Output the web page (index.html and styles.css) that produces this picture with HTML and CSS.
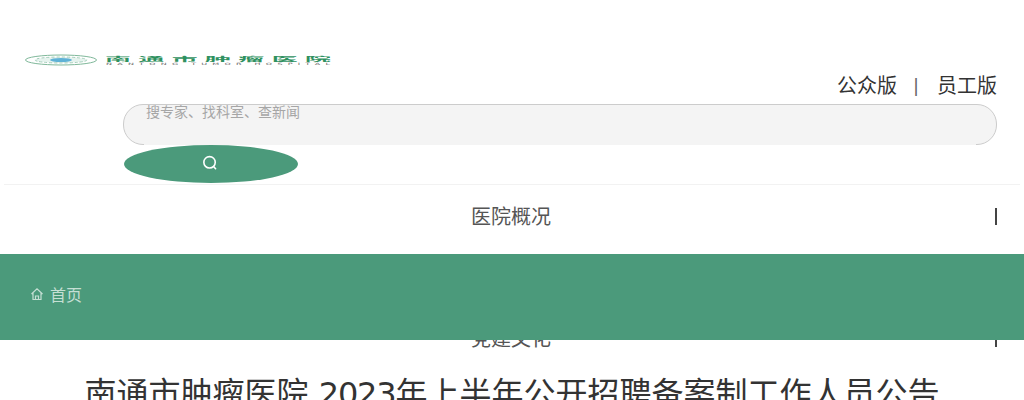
FILE: index.html
```html
<!DOCTYPE html>
<html lang="zh-CN">
<head>
    <meta charset="UTF-8">
    <meta name="viewport" content="width=device-width, initial-scale=1.0">
    <title>南通市肿瘤医院</title>
    <link rel="stylesheet" href="styles.css">
</head>
<body>
    <div class="logo">
        <svg width="306" height="12" viewBox="0 0 306 12">
            <ellipse cx="36" cy="6" rx="35.500" ry="5" fill="#fff" stroke="#7fb89a" stroke-width="1"/>
            <ellipse cx="36" cy="6" rx="26" ry="3" fill="#e6f3ee" stroke="#a5cfbb" stroke-width="1" stroke-dasharray="3 2"/>
            <ellipse cx="36" cy="6" rx="11" ry="2" fill="#5fb2d6"/>
            <text class="logo-cn" transform="translate(80 6.500) scale(1 0.22)" textLength="226" lengthAdjust="spacing">南通市肿瘤医院</text>
            <text class="logo-en" transform="translate(81 10.500) scale(1 0.4)" textLength="224" lengthAdjust="spacing">NANTONG TUMOR HOSPITAL</text>
        </svg>
    </div>

    <div class="top-links">
        <span>公众版</span>
        <span class="sep">|</span>
        <span>员工版</span>
    </div>

    <div class="search">
        <div class="search-box">搜专家、找科室、查新闻</div>
        <div class="search-btn">
            <svg width="16" height="16" viewBox="0 0 14 14" fill="none" stroke="#fff" stroke-width="1.400">
                <circle cx="6.600" cy="6.400" r="5"/>
                <path d="M10.300 10.200l1.600 1.800" stroke-linecap="round"/>
            </svg>
        </div>
    </div>

    <ul class="nav">
        <li>医院概况</li>
        <li>科室导航</li>
        <li>党建文化</li>
    </ul>

    <h1 class="title">南通市肿瘤医院 <span class="year">2023</span>年上半年公开招聘备案制工作人员公告</h1>

    <div class="crumb">
        <svg width="14" height="14" viewBox="0 0 14 14" fill="none" stroke="#c5dfd4" stroke-width="1.200">
            <path d="M1.500 7L7 1.800l5.500 5.200M3 6v6.500h8V6M5.500 12.500V9h3v3.500"/>
        </svg>
        <span>首页</span>
    </div>
</body>
</html>
```

FILE: styles.css
```css
html, body {
    margin: 0;
    height: 400px;
    overflow: hidden;
}
body {
    position: relative;
    font-family: "DejaVu Sans", "Noto Sans CJK SC", sans-serif;
    background-color: #fff;
    color: #333;
}
.logo {
    padding: 54px 0 0 25px;
    height: 12px;
    line-height: 0;
}
.logo-cn {
    font-size: 26px;
    font-weight: bold;
    fill: #2f9160;
}
.logo-en {
    font-size: 8px;
    fill: #666;
}
.top-links {
    display: flex;
    justify-content: flex-end;
    gap: 16px;
    height: 38px;
    padding-right: 27px;
    font-size: 20px;
    line-height: 40px;
}
.sep {
    padding-right: 2px;
    color: #666;
    font-size: 18px;
}
.search {
    margin: 0 4px;
    padding: 0 23px 0 119px;
    border-bottom: 1px solid #f2f2f2;
}
.search-box {
    position: relative;
    height: 39px;
    padding-left: 22px;
    border: 1px solid #ccc;
    border-radius: 20px;
    background-color: #f4f4f4;
    color: #a6a6a6;
    font-size: 14px;
    line-height: 15px;
}
.search-box::after {
    content: "";
    position: absolute;
    left: 20px;
    right: 20px;
    bottom: -1px;
    height: 1px;
    background-color: #f4f4f4;
}
.search-btn {
    display: flex;
    align-items: center;
    justify-content: center;
    box-sizing: border-box;
    width: 174px;
    height: 38px;
    margin: 0 0 1px 1px;
    padding: 0 2px 2px 0;
    border-radius: 50%;
    background-color: #4b9a7b;
}
.nav {
    margin: 0;
    padding: 0;
    list-style: none;
}
.nav li {
    position: relative;
    height: 61px;
    padding-right: 2px;
    font-size: 20px;
    line-height: 65px;
    text-align: center;
    color: #555;
}
.nav li::after {
    content: "";
    position: absolute;
    right: 27px;
    top: 23px;
    width: 2px;
    height: 17px;
    background-color: #444;
}
.title {
    margin: 0;
    padding-top: 2px;
    font-size: 32px;
    font-weight: normal;
    line-height: 48px;
    text-align: center;
    color: #333;
}
.year {
    letter-spacing: -1.200px;
}
.crumb {
    position: absolute;
    left: 0;
    right: 0;
    top: 254px;
    display: flex;
    align-items: center;
    gap: 6px;
    box-sizing: border-box;
    height: 86px;
    padding: 0 0 6px 30px;
    background-color: #4b9a7b;
    color: #c5dfd4;
    font-size: 16px;
}
```
